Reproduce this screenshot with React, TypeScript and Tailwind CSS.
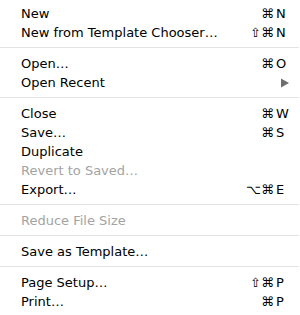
import React from "react";

type Item =
  | { type: "sep" }
  | { type: "item"; label: string; mods?: string; key?: string; disabled?: boolean; submenu?: boolean };

const items: Item[] = [
  { type: "item", label: "New", mods: "⌘", key: "N" },
  { type: "item", label: "New from Template Chooser…", mods: "⇧⌘", key: "N" },
  { type: "sep" },
  { type: "item", label: "Open…", mods: "⌘", key: "O" },
  { type: "item", label: "Open Recent", submenu: true },
  { type: "sep" },
  { type: "item", label: "Close", mods: "⌘", key: "W" },
  { type: "item", label: "Save…", mods: "⌘", key: "S" },
  { type: "item", label: "Duplicate" },
  { type: "item", label: "Revert to Saved…", disabled: true },
  { type: "item", label: "Export…", mods: "⌥⌘", key: "E" },
  { type: "sep" },
  { type: "item", label: "Reduce File Size", disabled: true },
  { type: "sep" },
  { type: "item", label: "Save as Template…" },
  { type: "sep" },
  { type: "item", label: "Page Setup…", mods: "⇧⌘", key: "P" },
  { type: "item", label: "Print…", mods: "⌘", key: "P" },
];

export default function App() {
  return (
    <div
      className="w-[300px] h-[315px] bg-white overflow-hidden pt-[4px] text-[13px] leading-[19px] text-black"
      style={{ fontFamily: '"DejaVu Sans", sans-serif' }}
    >
      {items.map((it, i) =>
        it.type === "sep" ? (
          <div key={i} className="pt-[5px] pb-[6px]">
            <div className="h-px bg-[#e3e3e3] mr-[1px]" />
          </div>
        ) : (
          <div
            key={i}
            className={`flex h-[19px] items-center pl-[21px] pr-[11px] ${
              it.disabled ? "text-[#a3a3a3]" : "text-black"
            }`}
          >
            <span className="flex-1 whitespace-nowrap">{it.label}</span>
            {it.mods && <span className="text-right whitespace-nowrap mr-[2px]">{it.mods}</span>}
            <span className="w-[13px] flex items-center">
              {it.key}
              {it.submenu && (
                <svg width="13" height="19" viewBox="0 0 13 19" className="block">
                  <polygon points="5,5.5 13,10 5,14.5" fill="#6e6e6e" />
                </svg>
              )}
            </span>
          </div>
        )
      )}
    </div>
  );
}
